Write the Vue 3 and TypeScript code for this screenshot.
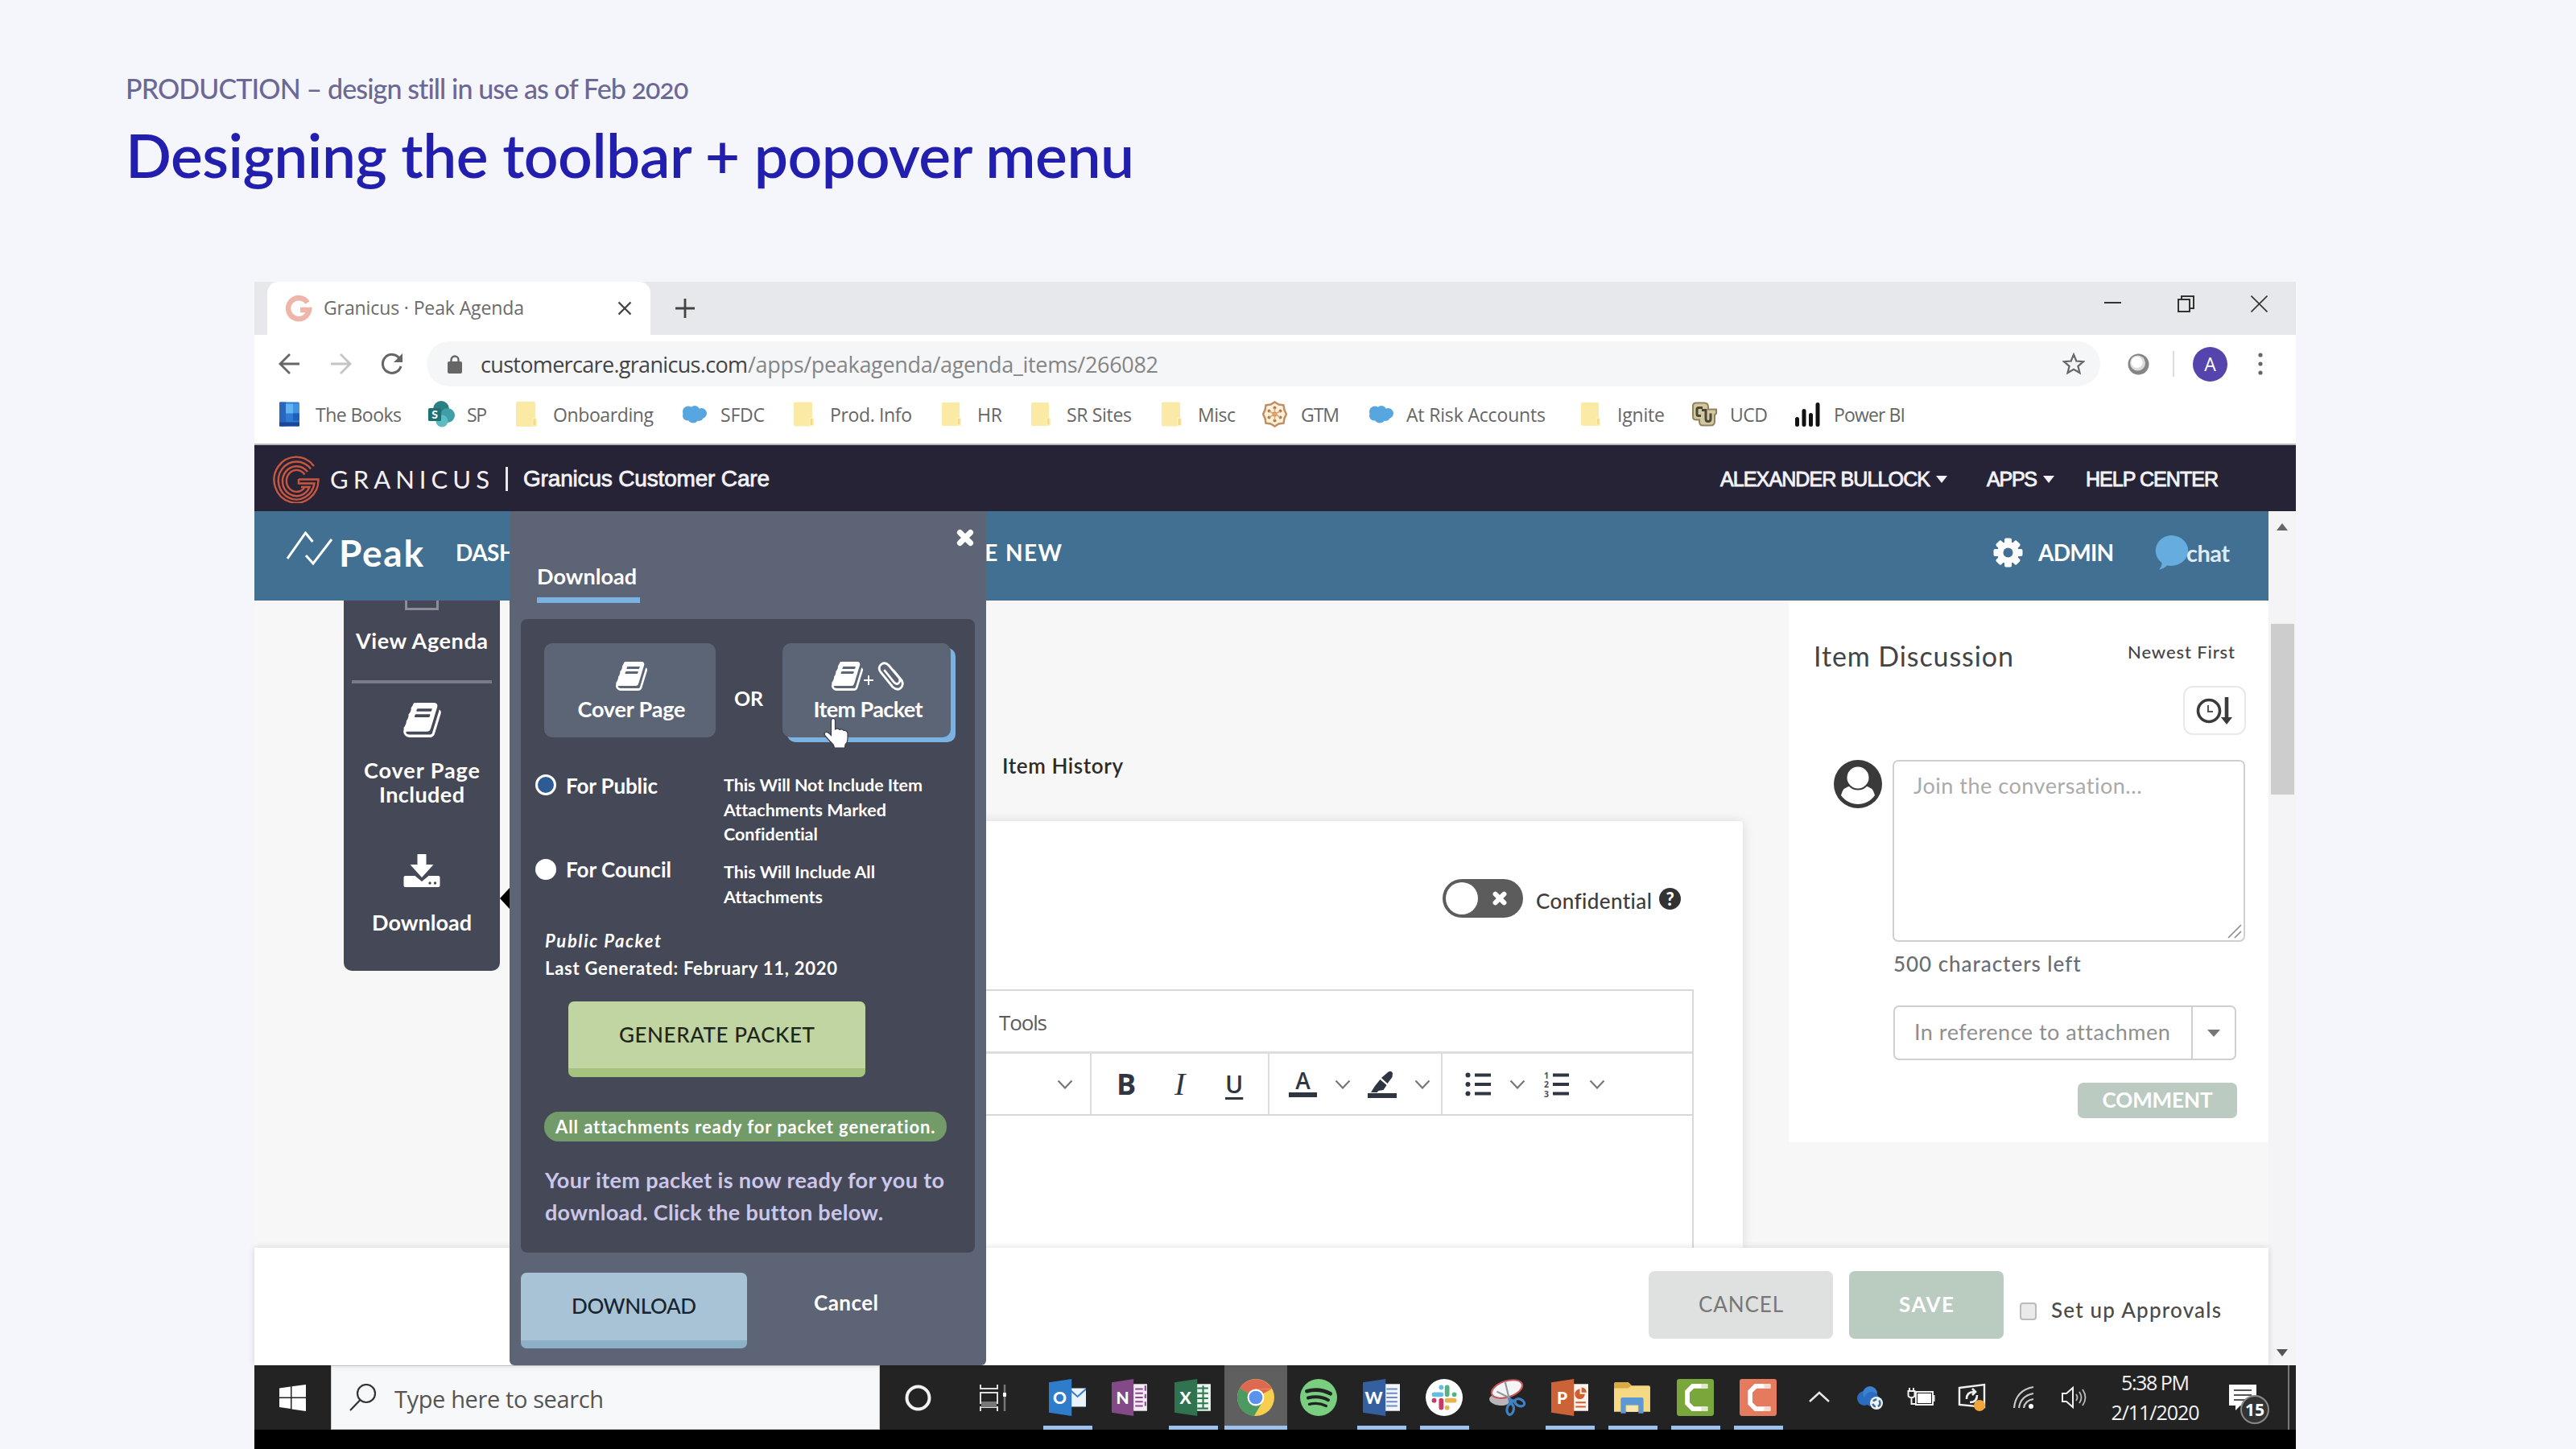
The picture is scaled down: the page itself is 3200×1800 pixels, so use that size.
<script setup lang="ts">
import type { Directive } from 'vue'

interface Bookmark {
  icon: string
  label: string
  lead: number
  size: number
  gap: number
  width: number
  letter?: string
}

interface TaskApp {
  icon: string
  open: boolean
  active?: boolean
  letter?: string
}

// Tracks a label out (or in) so that it takes exactly the given width.
const vFit: Directive<HTMLElement, number> = {
  mounted(el, { value }) {
    el.style.display = 'inline-block'
    el.style.whiteSpace = 'nowrap'
    el.style.width = 'max-content'
    const natural = el.getBoundingClientRect().width
    const count = (el.textContent ?? '').trim().length
    el.style.letterSpacing = `${(value - natural) / Math.max(count - 1, 1)}px`
    el.style.width = `${value}px`
  },
}

const bookmarks: Bookmark[] = [
  { icon: 'books', label: 'The Books', lead: 31, size: 25, gap: 20, width: 107 },
  { icon: 'sharepoint', label: 'SP', lead: 33, size: 33, gap: 15, width: 25, letter: 'S' },
  { icon: 'folder', label: 'Onboarding', lead: 36, size: 26, gap: 20, width: 125 },
  { icon: 'cloud', label: 'SFDC', lead: 35, size: 31, gap: 17, width: 55 },
  { icon: 'folder', label: 'Prod. Info', lead: 36, size: 25, gap: 20, width: 102 },
  { icon: 'folder', label: 'HR', lead: 37, size: 24, gap: 20, width: 31 },
  { icon: 'folder', label: 'SR Sites', lead: 36, size: 24, gap: 20, width: 81 },
  { icon: 'folder', label: 'Misc', lead: 37, size: 25, gap: 20, width: 47 },
  { icon: 'gtm', label: 'GTM', lead: 33, size: 31, gap: 17, width: 48 },
  { icon: 'cloud', label: 'At Risk Accounts', lead: 36, size: 31, gap: 16, width: 173 },
  { icon: 'folder', label: 'Ignite', lead: 44, size: 24, gap: 21, width: 59 },
  { icon: 'ucd', label: 'UCD', lead: 33, size: 32, gap: 16, width: 47 },
  { icon: 'powerbi', label: 'Power BI', lead: 34, size: 31, gap: 17, width: 89 },
]

const apps: TaskApp[] = [
  { icon: 'outlook', open: true, letter: 'O' },
  { icon: 'onenote', open: false, letter: 'N' },
  { icon: 'excel', open: true, letter: 'X' },
  { icon: 'chrome', open: true, active: true },
  { icon: 'spotify', open: false },
  { icon: 'word', open: true, letter: 'W' },
  { icon: 'slack', open: true },
  { icon: 'snip', open: false },
  { icon: 'powerpoint', open: true, letter: 'P' },
  { icon: 'explorer', open: true },
  { icon: 'camtasia', open: true },
  { icon: 'recorder', open: true },
]

const tray = ['chevron-up', 'onedrive', 'battery', 'sync', 'wifi', 'volume']
</script>

<template>
  <div class="slide">
    <svg class="sheet" width="0" height="0">
      <symbol id="i-books" viewBox="0 0 25 30">
        <rect width="25" height="30" rx="2" fill="#2f7bd3" />
        <rect width="8" height="30" fill="#2a66bd" />
        <rect x="8" y="2" width="9" height="12" fill="#63b5f2" />
        <rect x="17" y="2" width="8" height="12" fill="#3f93e0" />
        <rect x="17" y="14" width="8" height="9" fill="#1d5fbd" />
        <rect y="25" width="25" height="5" fill="#1b4596" />
      </symbol>
      <symbol id="i-sharepoint" viewBox="0 0 33 33">
        <circle cx="16" cy="10" r="10" fill="#2a7f85" />
        <circle cx="24" cy="18" r="9" fill="#3f9ea6" />
        <circle cx="17" cy="25" r="7.500" fill="#5cbcc2" />
        <rect x="0" y="9" width="16" height="16" rx="1.500" fill="#1d7076" />
      </symbol>
      <symbol id="i-folder" viewBox="0 0 25 30">
        <path d="M2 0h19q2 0 2 2v17l2 2v7q0 2-2 2H2q-2 0-2-2V2q0-2 2-2z" fill="#fbe9a6" />
        <path d="M20 20h4v9h-4z" fill="#f3da85" stroke="#fff6cf" stroke-width="1" />
      </symbol>
      <symbol id="i-cloud" viewBox="0 0 31 22">
        <g fill="#58a6e0">
          <circle cx="8" cy="8" r="7" />
          <circle cx="16" cy="7" r="6.500" />
          <circle cx="24.500" cy="10" r="6.500" />
          <circle cx="7" cy="13" r="6" />
          <circle cx="14" cy="15" r="7" />
          <circle cx="21" cy="13.500" r="6" />
        </g>
      </symbol>
      <symbol id="i-gtm" viewBox="0 0 31 33">
        <path d="M15.500 1.500l5 3 6 .8 1 6 2.500 5.200-2.500 5.200-1 6-6 .8-5 3-5-3-6-.8-1-6L1 16.500l2.500-5.200 1-6 6-.8z" fill="#fdf0dc" stroke="#c08f60" stroke-width="2.500" />
        <g fill="#b87a45">
          <circle cx="15.500" cy="16.500" r="3" /><circle cx="15.500" cy="8.500" r="2" /><circle cx="15.500" cy="24.500" r="2" />
          <circle cx="8.500" cy="12.500" r="2" /><circle cx="22.500" cy="12.500" r="2" /><circle cx="8.500" cy="20.500" r="2" /><circle cx="22.500" cy="20.500" r="2" />
        </g>
        <path d="M15.500 9v15M9 13l13 7M22 13L9 20" stroke="#e0a874" stroke-width="1.500" />
      </symbol>
      <symbol id="i-ucd" viewBox="0 0 32 32">
        <path d="M6 2h10q5 0 5 5v3h10v5l-2 2v8q0 5-5 5H14q-4 0-4-5v-2H6q-4 0-4-4V6q0-4 4-4z" fill="#d3c79f" stroke="#8d8363" stroke-width="2" />
        <path d="M14 8H9q-2 0-2 2v6q0 2 2 2h3M13 11h5v5M18 15v7q0 3 3 3t3-3v-7" fill="none" stroke="#4a4638" stroke-width="3" />
      </symbol>
      <symbol id="i-powerbi" viewBox="0 0 31 30">
        <path d="M2.500 21v7M11 11v17M19.500 16v12M28 3v25" stroke="#111" stroke-width="5" stroke-linecap="round" />
      </symbol>

      <symbol id="i-book" viewBox="0 0 1664 1536">
        <path transform="translate(0 1408) scale(1 -1)" d="M1639 1058q40-57 18-129l-275-906q-19-64-76.500-107.500t-122.500-43.500h-923q-77 0-148.500 53.500t-99.500 131.500q-24 67-2 127q0 4 3 27t4 37q1 8-3 21.500t-3 19.500q2 11 8 21t16.500 23.500t16.500 23.500q23 38 45 91.500t30 91.500q3 10 .5 30t-.5 28q3 11 17 28t17 23q21 36 42 92t25 90q1 9-2.500 32t.5 28q4 13 22 30.500t22 22.500q19 26 42.500 84.500t27.500 96.500q1 8-3 25.500t-2 26.500q2 8 9 18t18 23t17 21q8 12 16.500 30.500t15 35t16 36t19.500 32t26.500 23.500t36 11.500t47.500-5.500l-1-3q38 9 51 9h761q74 0 114-56t18-130l-274-906q-36-119-71.500-153.500t-128.500-34.500h-869q-27 0-38-15q-11-16-1-43q24-70 144-70h923q29 0 56 15.500t35 41.500l300 987q7 22 5 57q38-15 59-43zM575 1056q-4-13 2-22.500t20-9.500h608q13 0 25.500 9.500t16.500 22.500l21 64q4 13-2 22.500t-20 9.500h-608q-13 0-25.500-9.500t-16.500-22.500zM492 800q-4-13 2-22.500t20-9.500h608q13 0 25.500 9.500t16.500 22.500l21 64q4 13-2 22.500t-20 9.500h-608q-13 0-25.500-9.500t-16.500-22.500z" fill="#fff" />
      </symbol>
      <symbol id="i-download" viewBox="0 0 45 42">
        <path d="M17 1h11v13h9L22.500 30 8 14h9z" fill="#fff" />
        <path d="M2 28h12l8.500 7 8.500-7h12q2 0 2 2v10q0 2-2 2H2q-2 0-2-2V30q0-2 2-2z" fill="#fff" />
        <circle cx="32.500" cy="37" r="1.700" fill="#454856" /><circle cx="39" cy="37" r="1.700" fill="#454856" />
      </symbol>
      <symbol id="i-clip" viewBox="0 0 34 36">
        <path d="M9 11l12 15q3 3 5.500.500T27 20L14 4.500Q9-.5 4.500 3.500T4 13l15 18.500q6 5 10 1t1-9.500L20 11" fill="none" stroke="#fff" stroke-width="2.800" stroke-linecap="round" />
      </symbol>
      <symbol id="i-cross" viewBox="0 0 22 22">
        <path d="M5 5l12 12M17 5L5 17" stroke="#fff" stroke-width="6.500" stroke-linecap="round" />
      </symbol>
      <symbol id="i-chev" viewBox="0 0 20 12">
        <path d="M1.500 1.500L10 10.500l8.500-9" fill="none" stroke="#777" stroke-width="2.200" />
      </symbol>

      <symbol id="i-outlook" viewBox="0 0 44 44">
        <rect x="24" y="11" width="20" height="22" fill="#e8f3fb" />
        <path d="M24 12l10 9 10-9" fill="none" stroke="#3b7cc4" stroke-width="2" />
        <path d="M0 4l27-4v44L0 40z" fill="#2f7ccb" />
      </symbol>
      <symbol id="i-onenote" viewBox="0 0 44 44">
        <rect x="24" y="6" width="18" height="32" fill="#f3eaf4" />
        <path d="M28 12h9M28 17h9M28 22h9M28 27h9M28 32h9M40 8v6M40 18v5M40 27v5" stroke="#8c4b8f" stroke-width="2" />
        <path d="M0 4l26-4v44L0 40z" fill="#834a87" />
      </symbol>
      <symbol id="i-excel" viewBox="0 0 44 44">
        <rect x="24" y="6" width="19" height="32" fill="#eef6f1" />
        <path d="M27 11h13M27 17h13M27 23h13M27 29h13M27 35h13M34 8v28" stroke="#2d7a4e" stroke-width="2" />
        <path d="M0 4l27-4v44L0 40z" fill="#2f7350" />
      </symbol>
      <symbol id="i-word" viewBox="0 0 44 44">
        <rect x="24" y="6" width="20" height="32" fill="#f2f5fb" />
        <path d="M28 12h13M28 17h13M28 22h13M28 27h13M28 32h13" stroke="#6f8cc7" stroke-width="2" />
        <path d="M0 4l27-4v44L0 40z" fill="#35609f" />
      </symbol>
      <symbol id="i-powerpoint" viewBox="0 0 44 44">
        <rect x="24" y="6" width="20" height="32" fill="#fdf3ee" />
        <path d="M29 28h12M29 33h12" stroke="#cf5f31" stroke-width="2" />
        <path d="M34 12a6 6 0 1 0 6 6h-6zM36 10a6 6 0 0 1 6 6h-6z" fill="#cf5f31" />
        <path d="M0 4l27-4v44L0 40z" fill="#cc6237" />
      </symbol>
      <symbol id="i-chrome" viewBox="0 0 44 44">
        <circle cx="22" cy="22" r="22" fill="#f6cf4f" />
        <path d="M22 22L3 11A22 22 0 0 1 41 11.500L22 12z" fill="#dd6a50" />
        <path d="M41 12H22v10z" fill="#dd6a50" />
        <path d="M3 11A22 22 0 0 0 20 44l10-17-8-5z" fill="#4c9a62" />
        <path d="M3 11l10 17 9-6-8-4z" fill="#4c9a62" />
        <circle cx="22" cy="22" r="10" fill="#fff" />
        <circle cx="22" cy="22" r="8" fill="#5b93ea" />
      </symbol>
      <symbol id="i-spotify" viewBox="0 0 44 44">
        <circle cx="22" cy="22" r="22" fill="#79cf7f" />
        <path d="M8 14.500q15-4 28 3" fill="none" stroke="#222" stroke-width="4.500" stroke-linecap="round" />
        <path d="M9.500 22.500q13-3.500 24 2.500" fill="none" stroke="#222" stroke-width="3.800" stroke-linecap="round" />
        <path d="M11 30q10.500-2.500 20 2" fill="none" stroke="#222" stroke-width="3.200" stroke-linecap="round" />
      </symbol>
      <symbol id="i-slack" viewBox="0 0 44 44">
        <circle cx="22" cy="22" r="22" fill="#fff" />
        <g stroke-width="5.500" stroke-linecap="round">
          <path d="M18.500 10v.1M10 18.500h8.500" stroke="#63bfe0" />
          <path d="M25.500 10v8.500M34 18.500h.1" stroke="#56b284" />
          <path d="M34 25.500h-8.500M25.500 34v.1" stroke="#e4b44f" />
          <path d="M18.500 34v-8.500M10 25.500h.1" stroke="#c93a63" />
        </g>
      </symbol>
      <symbol id="i-snip" viewBox="0 0 44 44">
        <ellipse cx="13" cy="25" rx="12" ry="6.500" fill="#b9b5b8" transform="rotate(8 13 25)" />
        <ellipse cx="22" cy="12" rx="19" ry="9.500" fill="#f4f3f5" stroke="#c4575b" stroke-width="2" transform="rotate(-18 22 12)" />
        <path d="M20 4l5 21M10 15l16 8" stroke="#8f949c" stroke-width="2" />
        <ellipse cx="37" cy="28" rx="6" ry="4" fill="none" stroke="#3f83c6" stroke-width="3" transform="rotate(25 37 28)" />
        <ellipse cx="26" cy="36" rx="4" ry="6.500" fill="none" stroke="#3f83c6" stroke-width="3" transform="rotate(8 26 36)" />
        <path d="M24 25l9 2M25 23l2 7" stroke="#3f83c6" stroke-width="4" />
      </symbol>
      <symbol id="i-explorer" viewBox="0 0 44 44">
        <path d="M0 6q0-2 2-2h15l4 4h20q2 0 2 2v29H0z" fill="#f5d985" />
        <path d="M0 6q0-2 2-2h15l4 4-4 3H0z" fill="#dba944" />
        <path d="M8 24q0-2 2-2h23q2 0 2 2v17h-6V31H14v10H8z" fill="#5c98d6" />
        <rect x="15" y="32" width="13" height="7" fill="#f8e7ae" />
      </symbol>
      <symbol id="i-camtasia" viewBox="0 0 44 44">
        <rect width="44" height="44" rx="3" fill="#7aa73c" />
        <path d="M36 8.500H19L12.500 15v14l6.500 6.500h17" fill="none" stroke="#fff" stroke-width="5.500" />
        <path d="M29 8.500h8M29 35.500h8" stroke="#dfeacb" stroke-width="5.500" />
      </symbol>
      <symbol id="i-recorder" viewBox="0 0 44 44">
        <rect width="44" height="44" rx="3" fill="#e57a5f" />
        <path d="M36 8.500H19L12.500 15v14l6.500 6.500h17" fill="none" stroke="#fff" stroke-width="5.500" />
        <path d="M29 8.500h8M29 35.500h8" stroke="#f8dcd2" stroke-width="5.500" />
      </symbol>

      <symbol id="i-chevron-up" viewBox="0 0 36 36">
        <path d="M6 23L18 12l12 11" fill="none" stroke="#e8e8e8" stroke-width="2.400" />
      </symbol>
      <symbol id="i-onedrive" viewBox="0 0 36 36">
        <circle cx="11" cy="19" r="9" fill="#2a6cc0" /><circle cx="18" cy="13" r="9" fill="#3c80d0" /><circle cx="20" cy="20" r="9" fill="#2a6cc0" />
        <circle cx="26" cy="25" r="8" fill="#eef3f8" /><circle cx="26" cy="25" r="4.500" fill="none" stroke="#3d6c98" stroke-width="2.500" stroke-dasharray="5 3" />
      </symbol>
      <symbol id="i-battery" viewBox="0 0 36 36">
        <rect x="11" y="11" width="21" height="16" fill="none" stroke="#f0f0f0" stroke-width="2" />
        <rect x="13" y="13" width="17" height="12" fill="#fff" /><rect x="32" y="15" width="2.500" height="8" fill="#f0f0f0" />
        <path d="M3 6v4M8 6v4M1.500 10h8v5q0 3-4 3t-4-3zM5.500 18v8h6" fill="none" stroke="#f0f0f0" stroke-width="2" />
      </symbol>
      <symbol id="i-sync" viewBox="0 0 36 36">
        <path d="M2 6l31-4v28L2 27z" fill="none" stroke="#f0f0f0" stroke-width="2.400" />
        <path d="M11 20q0-9 9-9M18 7l4 4-4 4M24 15q0 9-9 9" fill="none" stroke="#f0f0f0" stroke-width="2.600" />
        <circle cx="27" cy="28" r="7" fill="#f0a63a" />
      </symbol>
      <symbol id="i-wifi" viewBox="0 0 36 36">
        <path d="M6 31Q8 9 30 5M12 31q2-15 18-18M18 31q1-9 12-11" fill="none" stroke="#c9c9c9" stroke-width="2.200" />
        <circle cx="27" cy="29" r="3" fill="#fff" />
      </symbol>
      <symbol id="i-volume" viewBox="0 0 36 36">
        <path d="M3 13h5l8-7v24l-8-7H3z" fill="none" stroke="#f0f0f0" stroke-width="2" />
        <path d="M20 14q3 4 0 8M24 11q5 7 0 14M28 8q7 10 0 20" fill="none" stroke="#bdbdbd" stroke-width="1.800" />
      </symbol>
    </svg>

    <header class="heading">
      <p><span v-fit="700">PRODUCTION – design still in use as of Feb 2020</span></p>
      <h1><span v-fit="1253">Designing the toolbar + popover menu</span></h1>
    </header>

    <section class="window">
      <div class="tabs">
        <div class="tab">
          <svg width="33" height="33" viewBox="0 0 33 33">
            <path d="M27 9A13 13 0 1 0 29 18H18" fill="none" stroke="#efb5a8" stroke-width="6.500" />
          </svg>
          <span class="tab-name" v-fit="249">Granicus · Peak Agenda</span>
          <svg class="tab-close" width="18" height="18" viewBox="0 0 18 18"><path d="M1.500 1.500l15 15M16.500 1.500l-15 15" stroke="#444" stroke-width="2.400" /></svg>
        </div>
        <svg class="plus" width="24" height="24" viewBox="0 0 24 24"><path d="M12 0v24M0 12h24" stroke="#444" stroke-width="2.800" /></svg>
        <div class="controls">
          <svg width="21" height="20" viewBox="0 0 21 20"><path d="M0 9h21" stroke="#333" stroke-width="2" /></svg>
          <svg width="21" height="21" viewBox="0 0 21 21"><path d="M1 5h14v15H1zM5 5V1h15v15h-4" fill="none" stroke="#333" stroke-width="2" /></svg>
          <svg width="21" height="21" viewBox="0 0 21 21"><path d="M.5.500l20 20M20.500.500l-20 20" stroke="#333" stroke-width="1.600" /></svg>
        </div>
      </div>

      <div class="address">
        <svg width="27" height="26" viewBox="0 0 27 26"><path d="M26 13H2M14 1L2 13l12 12" fill="none" stroke="#666" stroke-width="2.800" /></svg>
        <svg class="fwd" width="27" height="26" viewBox="0 0 27 26"><path d="M1 13h24M13 1l12 12-12 12" fill="none" stroke="#c4c4c4" stroke-width="2.800" /></svg>
        <svg class="reload" width="28" height="28" viewBox="0 0 28 28"><path d="M23.500 7.500A11.500 11.500 0 1 0 25 17" fill="none" stroke="#666" stroke-width="3" /><path d="M27 1v11H16z" fill="#666" /></svg>
        <div class="omnibox">
          <svg width="18" height="23" viewBox="0 0 18 23"><rect y="8" width="18" height="15" rx="2" fill="#666" /><path d="M4.500 9V6a4.500 4.500 0 0 1 9 0v3" fill="none" stroke="#666" stroke-width="2.400" /></svg>
          <span class="url"><span class="host" v-fit="332">customercare.granicus.com</span><span v-fit="510">/apps/peakagenda/agenda_items/266082</span></span>
          <svg class="star" width="28" height="28" viewBox="0 0 28 28"><path d="M14 2.500l3.300 8 8.700.700-6.600 5.600 2.100 8.400L14 20.700l-7.500 4.500 2.100-8.400L2 11.200l8.700-.7z" fill="none" stroke="#666" stroke-width="2.200" /></svg>
        </div>
        <svg class="ring" width="27" height="27" viewBox="0 0 27 27"><circle cx="13.500" cy="13.500" r="13" fill="#858585" /><circle cx="12.500" cy="12" r="9.500" fill="#dcdcdc" /><circle cx="11.500" cy="11" r="7" fill="#fff" /></svg>
        <i class="sep"></i>
        <span class="avatar">A</span>
        <svg class="dots" width="6" height="28" viewBox="0 0 6 28"><circle cx="3" cy="3" r="2.600" fill="#666" /><circle cx="3" cy="14" r="2.600" fill="#666" /><circle cx="3" cy="25" r="2.600" fill="#666" /></svg>
      </div>

      <nav class="bookmarks">
        <div v-for="b in bookmarks" :key="b.label" class="bookmark" :style="{ marginLeft: b.lead + 'px', columnGap: b.gap + 'px' }">
          <svg :style="{ width: b.size + 'px' }" height="33">
            <use :href="'#i-' + b.icon" />
            <text v-if="b.letter" class="glyph" x="8" y="22" font-size="14">{{ b.letter }}</text>
          </svg>
          <span v-fit="b.width">{{ b.label }}</span>
        </div>
      </nav>

      <div class="brandbar">
        <svg class="brand-logo" width="58" height="60" viewBox="0 0 58 60">
          <g fill="none" stroke="#c9573f" stroke-width="2.400">
            <path d="M51 14A27.500 28.500 0 1 0 56.500 30.500H32" />
            <path d="M47 17.500A22.500 23.500 0 1 0 51.500 35.500H32V30" />
            <path d="M43 21A17.500 18.500 0 1 0 45.500 40H35" />
            <path d="M39.500 24.500A12.500 13.500 0 1 0 39 41" />
          </g>
        </svg>
        <span class="brand-name" v-fit="198">GRANICUS</span>
        <i class="brand-sep"></i>
        <span class="brand-sub" v-fit="306">Granicus Customer Care</span>
        <div class="brand-links">
          <span v-fit="261">ALEXANDER BULLOCK</span><i class="caret"></i>
          <span class="apps" v-fit="63">APPS</span><i class="caret"></i>
          <span class="help" v-fit="165">HELP CENTER</span>
        </div>
      </div>

      <div class="app">
        <div class="page">
          <div class="menubar">
            <svg class="peak-logo" width="57" height="42" viewBox="0 0 57 42"><path d="M1 34L23.500 2l9 11M24 30l9 10L56 10" fill="none" stroke="#fff" stroke-width="3" /></svg>
            <span class="peak" v-fit="105">Peak</span>
            <span class="dash" v-fit="172">DASHBOARD</span>
            <span class="create" v-fit="190">CREATE NEW</span>
            <svg class="gear" width="37" height="37" viewBox="-18.500 -18.500 37 37">
              <g fill="#fff"><rect x="-4.500" y="-18" width="9" height="36" rx="2" /><rect x="-4.500" y="-18" width="9" height="36" rx="2" transform="rotate(45)" /><rect x="-4.500" y="-18" width="9" height="36" rx="2" transform="rotate(90)" /><rect x="-4.500" y="-18" width="9" height="36" rx="2" transform="rotate(135)" /><circle r="13.500" /></g>
              <circle r="6" fill="#427092" />
            </svg>
            <span class="admin" v-fit="94">ADMIN</span>
            <div class="chat">
              <svg width="44" height="43" viewBox="0 0 44 43"><path d="M22 0a21.500 19 0 1 1-6 37.500Q11 42 6 42.500q4-4 3.500-8.500A20 19 0 0 1 22 0z" fill="#67acde" /></svg>
              <span v-fit="54">chat</span>
            </div>
          </div>

          <main class="content">
            <aside class="rail">
              <i class="rail-box"></i>
              <span class="agenda" v-fit="164">View Agenda</span>
              <hr />
              <svg class="rail-book" width="47" height="43"><use href="#i-book" /></svg>
              <span class="cov1" v-fit="144">Cover Page</span>
              <span v-fit="106">Included</span>
              <svg class="rail-dl" width="46" height="42"><use href="#i-download" /></svg>
              <span class="rail-down" v-fit="124">Download</span>
            </aside>

            <div class="center">
              <div class="history"><span v-fit="150">Item History</span></div>
              <div class="card">
                <div class="confidential">
                  <div class="toggle"><i></i><svg width="20" height="20"><use href="#i-cross" /></svg></div>
                  <span v-fit="144">Confidential</span>
                  <b>?</b>
                </div>
                <div class="editor">
                  <div class="ed-menu"><span v-fit="60">Tools</span></div>
                  <div class="ed-tools">
                    <div class="g1"><svg width="20" height="12"><use href="#i-chev" /></svg></div>
                    <div class="g2"><b>B</b><em>I</em><u>U</u></div>
                    <div class="g3">
                      <span class="fore">A</span>
                      <svg class="c1" width="20" height="12"><use href="#i-chev" /></svg>
                      <svg class="pen" width="36" height="34" viewBox="0 0 36 34">
                        <path d="M17 9l8-7q4-3 6 1l-.5 5-6 8z" fill="#2f3542" /><path d="M15.500 11l8 7-4 6-6 1-2 2H4l5-8z" fill="#2f3542" /><rect y="28" width="36" height="6" fill="#2f3542" />
                      </svg>
                      <svg class="c2" width="20" height="12"><use href="#i-chev" /></svg>
                    </div>
                    <div class="g4">
                      <svg width="32" height="30" viewBox="0 0 32 30"><path d="M12 3.500h20M12 15h20M12 26.500h20" stroke="#2f3542" stroke-width="4" /><g fill="#2f3542"><circle cx="3.500" cy="3.500" r="3" /><circle cx="3.500" cy="15" r="3" /><circle cx="3.500" cy="26.500" r="3" /></g></svg>
                      <svg class="c3" width="20" height="12"><use href="#i-chev" /></svg>
                      <svg class="num" width="32" height="32" viewBox="0 0 32 32">
                        <path d="M11 4.500h20M11 16h20M11 27.500h20" stroke="#2f3542" stroke-width="4" />
                        <g font-family="Open Sans, sans-serif" font-size="10.500" font-weight="700" fill="#4a4f5a"><text x="0" y="8.500">1</text><text x="0" y="20">2</text><text x="0" y="31.500">3</text></g>
                      </svg>
                      <svg class="c4" width="20" height="12"><use href="#i-chev" /></svg>
                    </div>
                  </div>
                </div>
              </div>
            </div>

            <aside class="discussion">
              <div class="disc-head"><h2 v-fit="248">Item Discussion</h2><span v-fit="133">Newest First</span></div>
              <div class="sort">
                <svg width="46" height="34" viewBox="0 0 46 34"><circle cx="16" cy="17" r="13.500" fill="none" stroke="#3b3b3b" stroke-width="3.600" /><path d="M15 10v8h6" fill="none" stroke="#555" stroke-width="2" /><path d="M38 0v28" stroke="#3b3b3b" stroke-width="4.600" /><path d="M31 25h14l-7 9z" fill="#3b3b3b" /></svg>
              </div>
              <div class="compose">
                <svg width="60" height="60" viewBox="0 0 60 60"><circle cx="30" cy="30" r="30" fill="#3a3a3a" /><path d="M9 44q2-11 14-12 7 6 14 0 12 1 14 12a25.500 25.500 0 0 1-42 0z" fill="#fff" /><circle cx="30" cy="22" r="14.500" fill="#fff" stroke="#3a3a3a" stroke-width="2" /></svg>
                <div class="area">
                  <span v-fit="284">Join the conversation...</span>
                  <svg width="18" height="18" viewBox="0 0 18 18"><path d="M1 17L17 1M9 17l8-8" stroke="#888" stroke-width="1.600" /></svg>
                </div>
              </div>
              <div class="left-count"><span v-fit="232">500 characters left</span></div>
              <div class="reference"><div class="ref-text"><span v-fit="327">In reference to attachment</span></div><div class="ref-arrow"><i></i></div></div>
              <div class="comment"><span v-fit="137">COMMENT</span></div>
            </aside>
          </main>

          <footer class="actions">
            <div class="btn cancel"><span v-fit="105">CANCEL</span></div>
            <div class="btn save"><span v-fit="68">SAVE</span></div>
            <i class="check"></i>
            <span class="setup" v-fit="211">Set up Approvals</span>
          </footer>
        </div>
        <div class="scroll"><i class="up"></i><i class="thumb"></i><i class="down"></i></div>

        <i class="pointer"></i>
        <div class="popover">
          <svg class="pop-close" width="24" height="24"><use href="#i-cross" /></svg>
          <div class="pop-tab"><span v-fit="124">Download</span></div>
          <div class="panel">
            <div class="choices">
              <div class="choice cover">
                <svg width="39" height="36"><use href="#i-book" /></svg>
                <span v-fit="134">Cover Page</span>
              </div>
              <span class="or"><span v-fit="36">OR</span></span>
              <div class="choice item">
                <div class="pair">
                  <svg width="39" height="36"><use href="#i-book" /></svg>
                  <svg class="add" width="12" height="12" viewBox="0 0 12 12"><path d="M6 0v12M0 6h12" stroke="#fff" stroke-width="2" /></svg>
                  <svg width="34" height="36"><use href="#i-clip" /></svg>
                </div>
                <span v-fit="136">Item Packet</span>
                <svg class="hand" width="33" height="39" viewBox="0 0 33 39"><path d="M12 1.500q2.500 0 2.500 3V15q3-2 5.500.500 3-1.500 5 1 4-1 5 3V27q0 4-3 7l-.5 4h-13l-1-3.500Q8 30 2 23q-2-3.500 1-4.500 2.500-.5 6.500 4V4.500q0-3 2.500-3z" fill="#fff" stroke="#3a3d48" stroke-width="1.200" /></svg>
              </div>
            </div>
            <div class="option">
              <i class="radio on"></i>
              <span class="opt-name" v-fit="114">For Public</span>
              <p class="note"><span v-fit="247">This Will Not Include Item</span><span v-fit="201">Attachments Marked</span><span v-fit="117">Confidential</span></p>
            </div>
            <div class="option second">
              <i class="radio"></i>
              <span class="opt-name" v-fit="131">For Council</span>
              <p class="note"><span v-fit="188">This Will Include All</span><span v-fit="122">Attachments</span></p>
            </div>
            <div class="stamp"><em v-fit="144">Public Packet</em><span v-fit="363">Last Generated: February 11, 2020</span></div>
            <div class="generate"><span v-fit="243">GENERATE PACKET</span></div>
            <div class="ready"><span v-fit="471">All attachments ready for packet generation.</span></div>
            <p class="message"><span v-fit="496">Your item packet is now ready for you to</span><span v-fit="419">download. Click the button below.</span></p>
          </div>
          <div class="pop-foot">
            <div class="dl-btn"><span v-fit="155">DOWNLOAD</span></div>
            <span class="dismiss" v-fit="80">Cancel</span>
          </div>
        </div>
      </div>

      <div class="taskbar">
        <div class="start"><svg width="33" height="33" viewBox="0 0 33 33"><path d="M0 4.500L14 2.500v13H0zM15.500 2.200L33 0v15.500H15.500zM0 17h14v13L0 28zM15.500 17H33v16l-17.500-2.500z" fill="#fff" /></svg></div>
        <div class="search">
          <svg width="34" height="34" viewBox="0 0 34 34"><circle cx="21" cy="12" r="11" fill="none" stroke="#333" stroke-width="2.200" /><path d="M13.500 20L1 33" stroke="#333" stroke-width="2.200" /></svg>
          <span v-fit="260">Type here to search</span>
        </div>
        <div class="slot first"><svg width="33" height="33" viewBox="0 0 33 33"><circle cx="16.500" cy="16.500" r="14" fill="none" stroke="#f2f2f2" stroke-width="4" /></svg></div>
        <div class="slot view"><svg width="33" height="33" viewBox="0 0 33 33"><path d="M1 0v5h21V0M1 33v-5h21v5M1 10h21v13H1z" fill="none" stroke="#ddd" stroke-width="2" /><rect x="2" y="21" width="19" height="7" fill="#777" /><path d="M31 0v33" stroke="#777" stroke-width="2.500" /><rect x="29" y="10" width="4" height="5" fill="#fff" /></svg></div>
        <div v-for="a in apps" :key="a.icon" class="slot" :class="{ open: a.open, active: a.active }">
          <svg width="46" height="46" viewBox="0 0 44 44">
            <use :href="'#i-' + a.icon" />
            <text v-if="a.letter" class="glyph" x="13" y="29.500" font-size="20">{{ a.letter }}</text>
          </svg>
        </div>
        <div class="tray"><div v-for="t in tray" :key="t"><svg width="36" height="36"><use :href="'#i-' + t" /></svg></div></div>
        <div class="clock"><span v-fit="85">5:38 PM</span><span v-fit="110">2/11/2020</span></div>
        <div class="notes">
          <svg width="34" height="32" viewBox="0 0 34 32"><path d="M0 0h34v26H14l-6 6v-6H0z" fill="#fff" /><path d="M6 7h22M6 13h22M6 19h14" stroke="#555" stroke-width="2.200" /></svg>
          <span>15</span>
        </div>
      </div>
      <div class="letterbox"></div>
    </section>
  </div>
</template>

<style>
html,
body {
  margin: 0;
  background: #f5f6fc;
}
</style>

<style scoped>
* {
  box-sizing: border-box;
}
.slide {
  width: 3200px;
  height: 1800px;
  overflow: hidden;
  background: #f5f6fc;
  font-family: Lato, 'Open Sans', sans-serif;
  display: flex;
  flex-direction: column;
}
.sheet {
  position: absolute;
}
svg {
  display: block;
  flex: none;
}
span,
i {
  flex: none;
}
p,
h1,
h2 {
  margin: 0;
}
.glyph {
  font-family: Lato, sans-serif;
  font-weight: 900;
  text-anchor: middle;
  fill: #fff;
}
.heading {
  height: 350px;
  padding: 90px 0 0 156px;
}
.heading p {
  font-size: 34px;
  font-weight: 500;
  line-height: 40px;
  color: #6c6896;
  font-variant-numeric: oldstyle-nums;
}
.heading h1 {
  margin-top: 22px;
  font-size: 75px;
  font-weight: 600;
  line-height: 80px;
  color: #231fae;
}
.window {
  width: 2536px;
  height: 1450px;
  margin-left: 316px;
  background: #fff;
}

/* browser chrome */
.tabs {
  height: 66px;
  display: flex;
  align-items: center;
  background: #e6e8ec;
  font-family: 'Open Sans', 'Noto Sans', sans-serif;
}
.tab {
  width: 476px;
  height: 66px;
  margin-left: 16px;
  padding-left: 23px;
  display: flex;
  align-items: center;
  background: #fff;
  border-radius: 14px 14px 0 0;
}
.tab-name {
  margin: -2px 0 0 14px;
  font-size: 23px;
  color: #6b6b6b;
}
.tab-close {
  margin-left: 116px;
}
.plus {
  margin-left: 31px;
}
.controls {
  margin-left: auto;
  margin-right: 35px;
  padding-bottom: 12px;
  display: flex;
  gap: 70px;
}
.address {
  height: 72px;
  display: flex;
  align-items: center;
  padding-left: 30px;
  font-family: 'Open Sans', 'Noto Sans', sans-serif;
}
.fwd {
  margin-left: 37px;
}
.reload {
  margin-left: 36px;
}
.omnibox {
  width: 2079px;
  height: 56px;
  margin-left: 29px;
  padding-left: 26px;
  display: flex;
  align-items: center;
  background: #f5f6f7;
  border-radius: 28px;
}
.url {
  display: flex;
  margin-left: 23px;
  font-size: 27px;
  color: #858585;
}
.host {
  color: #444;
}
.star {
  margin-left: auto;
  margin-right: 19px;
}
.ring {
  margin-left: 34px;
}
.sep {
  width: 2px;
  height: 32px;
  margin-left: 29px;
  background: #ddd;
}
.avatar {
  width: 43px;
  height: 43px;
  margin-left: 23px;
  border-radius: 50%;
  background: #5644ad;
  color: #fff;
  font-size: 23px;
  line-height: 43px;
  text-align: center;
}
.dots {
  margin-left: 38px;
}
.bookmarks {
  height: 65px;
  padding-bottom: 10px;
  display: flex;
  align-items: center;
  border-bottom: 2px solid #b9b9bd;
  font-family: 'Open Sans', 'Noto Sans', sans-serif;
  font-size: 23px;
  color: #666;
}
.bookmark {
  display: flex;
  align-items: center;
}

/* product header */
.brandbar {
  height: 82px;
  padding-top: 1px;
  display: flex;
  align-items: center;
  background: #262337;
  color: #f2f2f5;
  font-family: 'Liberation Sans', Arial, sans-serif;
}
.brand-logo {
  margin-left: 23px;
}
.brand-name {
  margin-left: 13px;
  font-family: Lato, sans-serif;
  font-weight: 400;
  font-size: 31px;
}
.brand-sep {
  width: 3px;
  height: 30px;
  margin-left: 20px;
  background: #e8e8ee;
}
.brand-sub {
  margin-left: 19px;
  margin-top: 1px;
  font-size: 28px;
  -webkit-text-stroke: 0.8px #f2f2f5;
}
.brand-links {
  margin-left: auto;
  margin-right: 96px;
  padding-top: 1px;
  display: flex;
  align-items: center;
  font-size: 25px;
  -webkit-text-stroke: 0.9px #f2f2f5;
}
.caret {
  margin-left: 7px;
  border: 7px solid transparent;
  border-top: 9px solid #f2f2f5;
  border-bottom: 0;
}
.apps {
  margin-left: 49px;
}
.help {
  margin-left: 39px;
}

.app {
  position: relative;
  height: 1061px;
  display: flex;
}
.page {
  width: 2502px;
}
.menubar {
  height: 111px;
  padding: 0 48px 9px 40px;
  display: flex;
  align-items: center;
  background: #427092;
  color: #fff;
  font-weight: 700;
  font-size: 28px;
}
.peak-logo {
  margin-top: -10px;
}
.peak {
  margin-left: 8px;
  font-size: 46px;
}
.dash {
  margin-left: 40px;
}
.create {
  margin-left: 391px;
}
.gear {
  margin-left: auto;
}
.admin {
  margin-left: 19px;
}
.chat {
  margin-left: 50px;
  display: flex;
  align-items: center;
  color: #dcecf8;
  font-size: 29px;
}
.chat span {
  margin-left: -4px;
  margin-top: 2px;
  line-height: 40px;
}

.content {
  height: 804px;
  display: flex;
  overflow: hidden;
  background: #f7f7f8;
}
.rail {
  width: 194px;
  height: 460px;
  margin-left: 111px;
  flex: none;
  display: flex;
  flex-direction: column;
  align-items: center;
  background: #454856;
  border-radius: 0 0 10px 10px;
  color: #fff;
  font-weight: 700;
  font-size: 27px;
  line-height: 30px;
}
.rail-box {
  width: 42px;
  height: 12px;
  border: 3px solid #8b8d98;
  border-top: 0;
}
.agenda {
  margin-top: 23px;
}
.rail hr {
  width: 174px;
  height: 4px;
  margin: 34px 0 0;
  border: 0;
  background: #797b86;
}
.rail-book {
  margin-top: 24px;
}
.cov1 {
  margin-top: 26px;
}
.rail-dl {
  margin-top: 58px;
}
.rail-down {
  margin-top: 29px;
}

.center {
  width: 1465px;
  margin-left: 79px;
  flex: none;
  display: flex;
  flex-direction: column;
}
.history {
  padding: 185px 0 49px 545px;
  font-size: 26px;
  line-height: 40px;
  font-weight: 600;
  color: #2c2c2c;
}
.card {
  flex: 1;
  padding-top: 72px;
  display: flex;
  flex-direction: column;
  background: #fff;
  border-radius: 4px 4px 0 0;
  box-shadow: 0 0 14px rgba(0, 0, 0, 0.12);
}
.confidential {
  height: 48px;
  margin-left: 1092px;
  display: flex;
  align-items: center;
  font-size: 26px;
  font-weight: 500;
  color: #3d3d3d;
}
.confidential > span {
  margin-left: 16px;
  margin-top: 6px;
}
.confidential b {
  width: 27px;
  height: 27px;
  margin-left: 9px;
  border-radius: 50%;
  background: #333;
  color: #fff;
  font-size: 22px;
  font-weight: 900;
  line-height: 27px;
  text-align: center;
}
.toggle {
  width: 100px;
  height: 48px;
  padding: 0 19px 0 4px;
  display: flex;
  align-items: center;
  justify-content: space-between;
  border-radius: 24px;
  background: #5c5c5c;
}
.toggle i {
  width: 40px;
  height: 40px;
  border-radius: 50%;
  background: #fff;
}
.editor {
  flex: 1;
  width: 1364px;
  margin: 89px 0 0 40px;
  border: 2px solid #d8d8d8;
  border-bottom: 0;
}
.ed-menu {
  height: 78px;
  padding-left: 499px;
  display: flex;
  align-items: center;
  border-bottom: 3px solid #dedede;
  font-family: 'Open Sans', sans-serif;
  font-size: 26px;
  color: #5c5c5c;
}
.ed-menu span {
  margin-top: 3px;
}
.ed-tools {
  height: 77px;
  display: flex;
  border-bottom: 2px solid #d8d8d8;
  color: #2f3542;
  font-family: 'Open Sans', sans-serif;
}
.ed-tools > div {
  display: flex;
  align-items: center;
  border-right: 2px solid #dcdcdc;
}
.ed-tools > .g4 {
  border: 0;
  padding-left: 28px;
}
.g1 {
  width: 614px;
  justify-content: flex-end;
  padding-right: 21px;
}
.g2 {
  width: 221px;
  padding-left: 31px;
  font-size: 36px;
}
.g2 b {
  width: 72px;
  font-weight: 700;
}
.g2 em {
  width: 63px;
  font-family: 'Liberation Serif', serif;
  font-size: 40px;
}
.g2 u {
  font-size: 30px;
  font-weight: 600;
  text-decoration-thickness: 3px;
  text-underline-offset: 5px;
}
.g3 {
  width: 215px;
  padding-left: 24px;
}
.fore {
  width: 35px;
  height: 32px;
  border-bottom: 6px solid #2f3542;
  font-size: 28px;
  font-weight: 600;
  line-height: 23px;
  text-align: center;
}
.c1 {
  margin-left: 22px;
}
.pen {
  margin-left: 21px;
}
.c2 {
  margin-left: 22px;
}
.c3 {
  margin-left: 23px;
}
.num {
  margin-left: 23px;
}
.c4 {
  margin-left: 24px;
}

.discussion {
  width: 596px;
  height: 673px;
  margin-left: 57px;
  flex: none;
  background: #fff;
  color: #444;
}
.disc-head {
  padding: 43px 0 0 31px;
  display: flex;
}
.disc-head h2 {
  font-size: 34px;
  font-weight: 400;
  line-height: 52px;
}
.disc-head span {
  margin-left: 142px;
  font-size: 22px;
  font-weight: 500;
  line-height: 41px;
}
.sort {
  width: 78px;
  height: 61px;
  margin: 11px 0 0 490px;
  display: flex;
  align-items: center;
  justify-content: center;
  border: 2px solid #e9e9e9;
  border-radius: 12px;
}
.compose {
  margin: 31px 0 0 56px;
  display: flex;
  gap: 13px;
}
.area {
  width: 438px;
  height: 226px;
  padding: 15px 2px 2px 24px;
  display: flex;
  justify-content: space-between;
  border: 2px solid #cfcfcf;
  border-radius: 7px;
  font-size: 27px;
  line-height: 30px;
  color: #aaa;
}
.area svg {
  align-self: flex-end;
}
.left-count {
  margin: 12px 0 0 130px;
  font-size: 26px;
  font-weight: 500;
  line-height: 30px;
  color: #6b6d75;
}
.reference {
  width: 426px;
  height: 68px;
  margin: 37px 0 0 130px;
  display: flex;
  border: 2px solid #cfcfcf;
  border-radius: 7px;
}
.ref-text {
  width: 343px;
  padding-left: 24px;
  overflow: hidden;
  font-size: 27px;
  line-height: 62px;
  color: #8f8f8f;
}
.ref-arrow {
  flex: 1;
  margin-left: 25px;
  display: flex;
  align-items: center;
  justify-content: center;
  border-left: 2px solid #cfcfcf;
}
.ref-arrow i {
  border: 8px solid transparent;
  border-top: 9px solid #777;
  border-bottom: 0;
}
.comment {
  width: 198px;
  height: 44px;
  margin: 28px 0 0 359px;
  padding-bottom: 2px;
  display: flex;
  align-items: center;
  justify-content: center;
  background: #bccbc2;
  border-radius: 7px;
  color: #fff;
  font-size: 26px;
  font-weight: 700;
}

.actions {
  height: 146px;
  padding-left: 1732px;
  display: flex;
  position: relative;
  background: #fff;
  box-shadow: 0 0 8px rgba(0, 0, 0, 0.14);
  font-size: 26px;
}
.btn {
  height: 84px;
  margin-top: 29px;
  border-radius: 7px;
  display: flex;
  align-items: center;
  justify-content: center;
  padding-bottom: 2px;
}
.cancel {
  width: 229px;
  background: #dfe1e0;
  color: #777;
}
.save {
  width: 192px;
  margin-left: 20px;
  background: #bacbc0;
  color: #fff;
  font-weight: 700;
}
.check {
  width: 21px;
  height: 22px;
  margin: 68px 0 0 20px;
  border: 2px solid #bbb;
  border-radius: 4px;
  background: #eaeaea;
}
.setup {
  margin: 62px 0 0 18px;
  line-height: 30px;
  height: 30px;
  font-weight: 500;
  color: #4a4a4a;
}
.scroll {
  width: 34px;
  display: flex;
  flex-direction: column;
  align-items: center;
  background: #f4f4f6;
}
.up {
  margin-top: 15px;
  border: 7px solid transparent;
  border-bottom: 9px solid #666;
  border-top: 0;
}
.thumb {
  width: 29px;
  height: 212px;
  margin-top: 116px;
  background: #cdcdcd;
}
.down {
  margin: auto 0 11px;
  border: 7px solid transparent;
  border-top: 9px solid #555;
  border-bottom: 0;
}

/* download popover */
.pointer {
  position: absolute;
  left: 305px;
  top: 468px;
  border: 13px solid transparent;
  border-right: 12px solid #000;
  border-left: 0;
}
.popover {
  position: absolute;
  left: 317px;
  top: 0;
  width: 592px;
  height: 1061px;
  padding: 0 14px;
  background: #5c6475;
  border-radius: 0 0 6px 6px;
  color: #fff;
  font-weight: 700;
  font-size: 27px;
}
.pop-close {
  margin: 21px 0 0 540px;
}
.pop-tab {
  width: 128px;
  height: 52px;
  margin: 17px 0 0 20px;
  border-bottom: 7px solid #7cb2e1;
  line-height: 38px;
}
.panel {
  height: 787px;
  margin-top: 20px;
  padding: 30px 0 0 29px;
  background: #454856;
  border-radius: 8px;
}
.choices {
  display: flex;
  height: 117px;
}
.choice {
  position: relative;
  height: 117px;
  padding: 23px 0 0 4px;
  display: flex;
  flex-direction: column;
  align-items: center;
  background: #5c6576;
  border-radius: 10px;
}
.choice > span {
  margin-top: 7px;
  line-height: 31px;
}
.cover {
  width: 213px;
}
.item {
  width: 209px;
  box-shadow: 6px 6px 0 #7cb2e1;
}
.or {
  width: 83px;
  padding-left: 23px;
  font-size: 25px;
  line-height: 136px;
}
.pair {
  display: flex;
  gap: 1px;
}
.add {
  margin-top: 17px;
  margin-right: 4px;
}
.hand {
  position: absolute;
  left: 51px;
  top: 92px;
}
.option {
  height: 92px;
  margin: 44px 0 0 -11px;
  display: flex;
}
.option.second {
  height: 61px;
  margin-top: 16px;
}
.radio {
  width: 26px;
  height: 26px;
  margin-top: 2px;
  border-radius: 50%;
  background: #fff;
}
.radio.on {
  border: 3px solid #fff;
  background: #2c5c93;
}
.opt-name {
  margin-left: 12px;
  font-size: 26px;
  line-height: 32px;
}
.option.second .opt-name {
  line-height: 25px;
}
.option.second .radio {
  margin-top: -1px;
}
.note {
  margin-left: auto;
  width: 312px;
  display: flex;
  flex-direction: column;
  font-size: 21.500px;
  line-height: 30.500px;
}
.stamp {
  margin-top: 23px;
  padding-left: 1px;
  display: flex;
  flex-direction: column;
  font-size: 22px;
  line-height: 34px;
}
.generate {
  width: 369px;
  height: 94px;
  margin: 24px 0 0 30px;
  display: flex;
  justify-content: center;
  background: #c1d5a3;
  border-bottom: 11px solid #a5c37e;
  border-radius: 7px;
  color: #1d261c;
  font-size: 26px;
  font-weight: 500;
  line-height: 82px;
}
.ready {
  width: 500px;
  height: 37px;
  margin-top: 43px;
  padding-left: 14px;
  border-radius: 18px;
  background: #739b69;
  font-size: 22px;
  line-height: 38px;
}
.message {
  margin-top: 28px;
  padding-left: 1px;
  display: flex;
  flex-direction: column;
  line-height: 39.500px;
  color: #cbc6ea;
}
.pop-foot {
  margin-top: 25px;
  display: flex;
}
.dl-btn {
  width: 281px;
  height: 94px;
  display: flex;
  justify-content: center;
  background: #a8c3d6;
  border-bottom: 10px solid #8bb0c8;
  border-radius: 7px;
  color: #18242f;
  font-size: 26px;
  font-weight: 500;
  line-height: 82px;
}
.dismiss {
  margin-left: 83px;
  font-size: 26px;
  line-height: 74px;
}

/* desktop taskbar */
.taskbar {
  height: 80px;
  display: flex;
  background: #232323;
  font-family: 'Open Sans', 'Noto Sans', sans-serif;
}
.start {
  width: 95px;
  display: flex;
  align-items: center;
  padding-left: 31px;
}
.search {
  width: 682px;
  padding-left: 22px;
  display: flex;
  align-items: center;
  gap: 22px;
  background: #f7f8f9;
  border: 1px solid #ccc;
  font-size: 29px;
  color: #555;
}
.search span {
  margin-top: 3px;
}
.slot {
  width: 78px;
  display: flex;
  align-items: center;
  justify-content: center;
}
.first {
  margin-left: 8px;
}
.view {
  width: 108px;
}
.slot.open {
  background: linear-gradient(#9dc1ea, #9dc1ea) 50% 100% / 61px 5px no-repeat;
}
.slot.active {
  background: linear-gradient(#9dc1ea, #9dc1ea) 50% 100% / 78px 5px no-repeat #5f5f5f;
}
.tray {
  width: 381px;
  margin-left: 5px;
  display: flex;
}
.tray div {
  flex: 1;
  display: flex;
  align-items: center;
  justify-content: center;
}
.clock {
  width: 137px;
  padding-top: 3px;
  display: flex;
  flex-direction: column;
  align-items: center;
  font-size: 25px;
  line-height: 37px;
  color: #f2f2f2;
}
.notes {
  position: relative;
  width: 98px;
  padding: 24px 0 0 23px;
  border-right: 2px solid #777;
}
.notes span {
  position: absolute;
  left: 37px;
  top: 37px;
  width: 36px;
  height: 36px;
  border: 2px solid #8a8a8a;
  border-radius: 50%;
  background: #333;
  color: #fff;
  font-size: 21px;
  font-weight: 700;
  line-height: 32px;
  text-align: center;
}
.letterbox {
  height: 24px;
  background: #000;
}
</style>
